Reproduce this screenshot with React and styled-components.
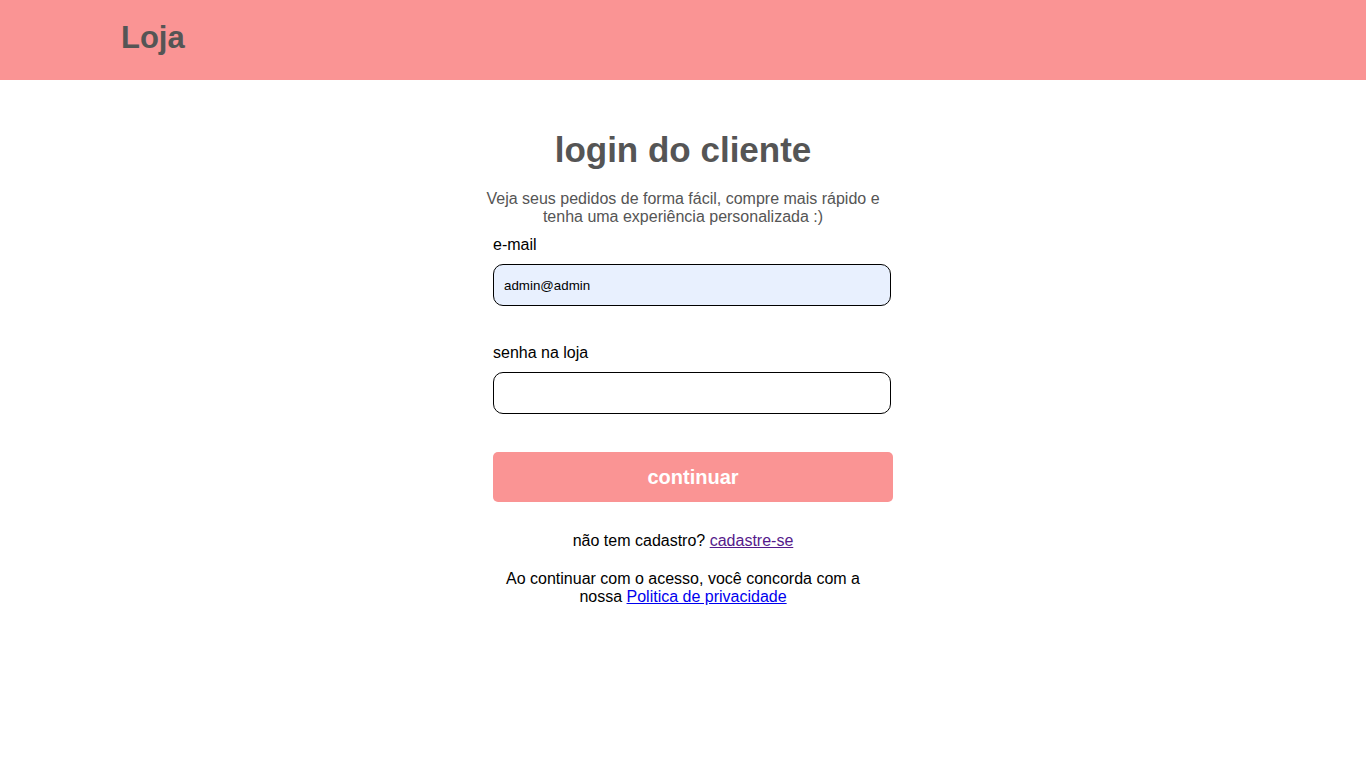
import React, { useState } from 'react';
import styled, { createGlobalStyle } from 'styled-components';

const GlobalStyle = createGlobalStyle`
  body {
    margin: 0;
    padding: 0;
    font-family: 'Liberation Sans', Arial, sans-serif;
    background-color: #ffffff;
    color: #000000;
  }
`;

const Header = styled.header`
  height: 80px;
  background-color: #fa9494;
  display: flex;
  align-items: center;
  padding-left: 121px;
`;

const Logo = styled.h1`
  margin: 0;
  font-size: 31px;
  font-weight: bold;
  color: #555555;
  transform: translateY(-2px);
`;

const Main = styled.main`
  display: flex;
  justify-content: center;
  padding-top: 50px;
`;

const Column = styled.div`
  width: 400px;
  display: flex;
  flex-direction: column;
  align-items: center;
  text-align: center;
`;

const Title = styled.h2`
  margin: 0;
  font-size: 35px;
  line-height: 40px;
  font-weight: bold;
  color: #555555;
`;

const Subtitle = styled.p`
  margin: 20px 0 10px;
  font-size: 16px;
  line-height: 18px;
  color: #555555;
`;

const Form = styled.form`
  width: 400px;
  margin-left: 20px;
  display: flex;
  flex-direction: column;
  text-align: left;
`;

const Field = styled.div`
  display: flex;
  flex-direction: column;
  margin-bottom: ${(props) => props.$gap}px;
`;

const Label = styled.label`
  font-size: 16px;
  line-height: 18px;
  margin-bottom: 10px;
`;

const Input = styled.input`
  width: 398px;
  height: 42px;
  box-sizing: border-box;
  border: 1px solid #000000;
  border-radius: 10px;
  padding: 0 10px;
  font-family: 'Liberation Sans', Arial, sans-serif;
  font-size: 13.33px;
  color: #000000;
  background-color: ${(props) => (props.$filled ? '#e8f0fe' : '#ffffff')};
  outline: none;
`;

const Button = styled.button`
  width: 400px;
  height: 50px;
  border: none;
  border-radius: 5px;
  background-color: #fa9494;
  color: #ffffff;
  font-family: 'Liberation Sans', Arial, sans-serif;
  font-size: 20px;
  font-weight: bold;
  cursor: pointer;
`;

const Note = styled.p`
  margin: ${(props) => props.$top}px 0 0;
  font-size: 16px;
  line-height: 18px;
  width: ${(props) => props.$width || 'auto'};
`;

const Link = styled.a`
  color: ${(props) => (props.$visited ? '#551a8b' : '#0000ee')};
  text-decoration: underline;
`;

const Login = () => {
  const [email, setEmail] = useState('admin@admin');
  const [password, setPassword] = useState('');

  return (
    <>
      <GlobalStyle />
      <Header>
        <Logo>Loja</Logo>
      </Header>
      <Main>
        <Column>
          <Title>login do cliente</Title>
          <Subtitle>
            Veja seus pedidos de forma fácil, compre mais rápido e tenha uma experiência personalizada :)
          </Subtitle>
          <Form onSubmit={(e) => e.preventDefault()}>
            <Field $gap={38}>
              <Label>e-mail</Label>
              <Input
                type="email"
                value={email}
                $filled
                onChange={(e) => setEmail(e.target.value)}
              />
            </Field>
            <Field $gap={38}>
              <Label>senha na loja</Label>
              <Input
                type="password"
                value={password}
                onChange={(e) => setPassword(e.target.value)}
              />
            </Field>
            <Button type="submit">continuar</Button>
          </Form>
          <Note $top={30}>
            não tem cadastro? <Link href="#" $visited>cadastre-se</Link>
          </Note>
          <Note $top={20} $width="360px">
            Ao continuar com o acesso, você concorda com a nossa{' '}
            <Link href="#">Politica de privacidade</Link>
          </Note>
        </Column>
      </Main>
    </>
  );
};

export default Login;
